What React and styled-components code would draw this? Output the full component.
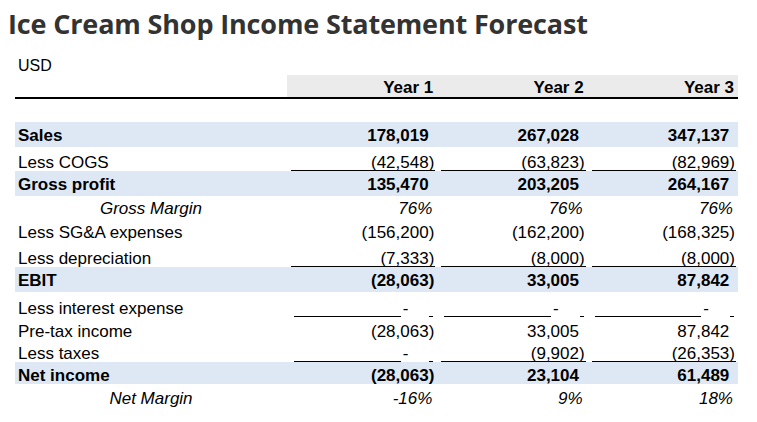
import React from "react";
import styled, { createGlobalStyle } from "styled-components";

const GlobalStyle = createGlobalStyle`
  html, body { margin: 0; padding: 0; background: #ffffff; }
  body { font-family: "Liberation Sans", Arial, sans-serif; color: #000; }
`;

const Page = styled.div`
  width: 757px;
  height: 422px;
  overflow: hidden;
  background: #fff;
`;

const Title = styled.h1`
  margin: 0;
  padding: 7px 0 0 8px;
  font-family: "Open Sans", "Lato", sans-serif;
  font-weight: 700;
  font-size: 27px;
  line-height: 34px;
  letter-spacing: -0.15px;
  color: #333333;
  white-space: nowrap;
`;

const Unit = styled.div`
  margin: 16px 0 0 18px;
  font-size: 16px;
  line-height: 18px;
  height: 18px;
`;

const Table = styled.div`
  margin-left: 15px;
  width: 723px;
  display: flex;
  flex-direction: column;
  font-family: "Liberation Sans", Arial, sans-serif;
  font-size: 17px;
`;

const Row = styled.div`
  display: grid;
  grid-template-columns: 272px repeat(3, 1fr);
  height: ${(p) => p.$h}px;
  background: ${(p) => (p.$band ? "#dde8f4" : "transparent")};
  font-weight: ${(p) => (p.$bold ? 700 : 400)};
  font-style: ${(p) => (p.$italic ? "italic" : "normal")};
`;

const HeaderRow = styled(Row)`
  height: 22px;
  border-bottom: 2px solid #000;
  box-sizing: content-box;
  font-weight: 700;
`;

const HeaderCell = styled.div`
  background: ${(p) => (p.$blank ? "transparent" : "#ebebeb")};
  display: flex;
  align-items: flex-end;
  justify-content: flex-end;
  padding: 0 4px 2px 0;
  line-height: 15px;
`;

const Label = styled.div`
  display: flex;
  align-items: flex-end;
  justify-content: ${(p) => (p.$center ? "center" : "flex-start")};
  padding: 0 ${(p) => (p.$center ? 3 : 0)}px ${(p) => p.$pb}px 3px;
  line-height: 15px;
  border-bottom: 1px solid transparent;
  white-space: nowrap;
`;

const ValueCell = styled.div`
  display: flex;
  align-items: flex-end;
  padding: 0 2px ${(p) => p.$pb}px 4px;
`;

const Amount = styled.div`
  flex: 1;
  text-align: right;
  padding-right: ${(p) => (p.$pct ? 3 : 1)}px;
  line-height: 15px;
  border-bottom: 1px solid ${(p) => (p.$ul ? "#000" : "transparent")};
  white-space: nowrap;
`;

const Pad = styled.span`
  visibility: hidden;
`;

const DashAmount = styled.div`
  flex: 1;
  display: flex;
  align-items: flex-end;
  line-height: 15px;
`;

const Rule = styled.span`
  flex: 1;
  margin-left: 3px;
  height: 0;
  border-bottom: 1px solid #000;
`;

const Dash = styled.span`
  border-bottom: 1px solid transparent;
  padding-left: 2px;
`;

const Gap = styled.span`
  width: 21px;
`;

const Tail = styled.span`
  width: 4px;
  margin-right: 2px;
  height: 0;
  border-bottom: 1px solid #000;
`;

const Spacer = styled.div`
  height: 23px;
`;

const rows = [
  { label: "Sales", v: ["178,019", "267,028", "347,137"], h: 25, pb: 3, band: true, bold: true },
  { label: "Less COGS", v: ["(42,548)", "(63,823)", "(82,969)"], h: 24, pb: 0, ul: [1, 1, 1] },
  { label: "Gross profit", v: ["135,470", "203,205", "264,167"], h: 25, pb: 3, band: true, bold: true },
  { label: "Gross Margin", v: ["76%", "76%", "76%"], h: 24, pb: 3, italic: true, center: true },
  { label: "Less SG&A expenses", v: ["(156,200)", "(162,200)", "(168,325)"], h: 25, pb: 4 },
  { label: "Less depreciation", v: ["(7,333)", "(8,000)", "(8,000)"], h: 22, pb: 0, ul: [1, 1, 1] },
  { label: "EBIT", v: ["(28,063)", "33,005", "87,842"], h: 25, pb: 3, band: true, bold: true },
  { label: "Less interest expense", v: ["-", "-", "-"], h: 25, pb: 0, ul: [1, 1, 1] },
  { label: "Pre-tax income", v: ["(28,063)", "33,005", "87,842"], h: 23, pb: 0 },
  { label: "Less taxes", v: ["-", "(9,902)", "(26,353)"], h: 22, pb: 0, ul: [1, 1, 1] },
  { label: "Net income", v: ["(28,063)", "23,104", "61,489"], h: 22, pb: 0, band: true, bold: true },
  { label: "Net Margin", v: ["-16%", "9%", "18%"], h: 25, pb: 2, italic: true, center: true },
];

function Value({ text, ul, pb }) {
  if (text === "-") {
    return (
      <ValueCell $pb={pb}>
        <DashAmount>
          <Rule />
          <Dash>-</Dash>
          <Gap />
          <Tail />
        </DashAmount>
      </ValueCell>
    );
  }
  const pct = text.endsWith("%");
  const neg = text.startsWith("(");
  return (
    <ValueCell $pb={pb}>
      <Amount $ul={ul} $pct={pct}>
        {text}
        {!neg && !pct && <Pad>)</Pad>}
      </Amount>
    </ValueCell>
  );
}

export default function App() {
  return (
    <Page>
      <GlobalStyle />
      <Title>Ice Cream Shop Income Statement Forecast</Title>
      <Unit>USD</Unit>
      <Table>
        <HeaderRow>
          <HeaderCell $blank />
          <HeaderCell>Year 1</HeaderCell>
          <HeaderCell>Year 2</HeaderCell>
          <HeaderCell>Year 3</HeaderCell>
        </HeaderRow>
        <Spacer />
        {rows.map((r) => (
          <Row key={r.label} $h={r.h} $band={r.band} $bold={r.bold} $italic={r.italic}>
            <Label $pb={r.pb} $center={r.center}>{r.label}</Label>
            {r.v.map((t, i) => (
              <Value key={i} text={t} ul={r.ul && r.ul[i]} pb={r.pb} />
            ))}
          </Row>
        ))}
      </Table>
    </Page>
  );
}
